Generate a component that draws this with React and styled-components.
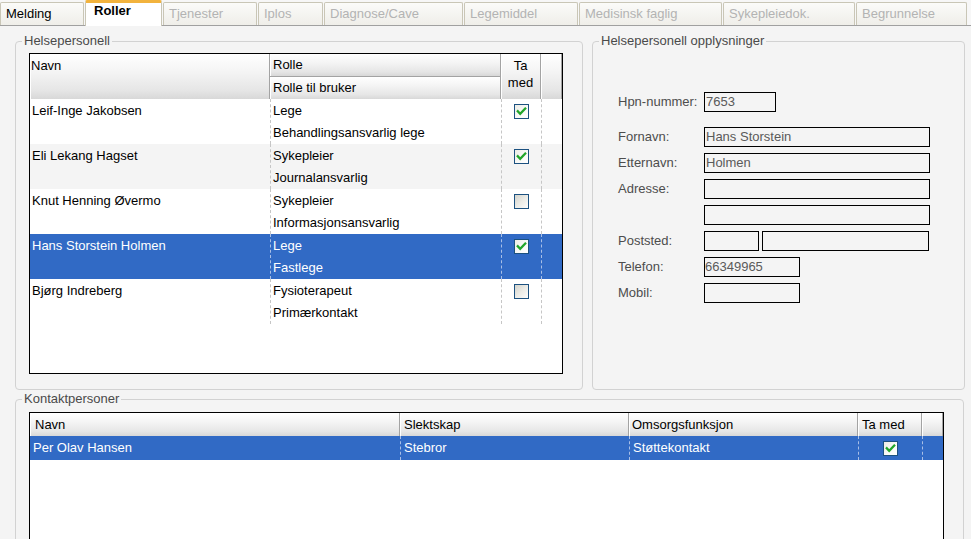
import React from 'react';
import styled, { createGlobalStyle } from 'styled-components';

const Global = createGlobalStyle`
  html, body { margin: 0; padding: 0; background: #f4f4f4; }
  body {
    font-family: "Liberation Sans", Arial, sans-serif;
    font-size: 13px;
    color: #000;
    overflow: hidden;
  }
`;

const Page = styled.div`
  width: 971px;
  height: 539px;
  display: flex;
  flex-direction: column;
  background: #f4f4f4;
  overflow: hidden;
`;

const TabStrip = styled.div`
  display: flex;
  align-items: flex-end;
  gap: 1px;
  height: 26px;
  box-sizing: border-box;
  border-bottom: 1px solid #a0a0a0;
  background: #f7f7f7;
`;

const Tab = styled.div`
  width: ${p => p.$w}px;
  flex: none;
  box-sizing: border-box;
  height: ${p => (p.$active ? 26 : 23)}px;
  margin-bottom: ${p => (p.$active ? -1 : 0)}px;
  padding-left: ${p => (p.$active ? 8 : 5)}px;
  display: flex;
  align-items: ${p => (p.$active ? 'flex-start' : 'center')};
  border: 1px solid #c9c6b6;
  border-bottom: none;
  border-top: ${p => (p.$active ? '3px solid #f2b33d' : '1px solid #c9c6b6')};
  border-radius: 2px 2px 0 0;
  background: ${p => (p.$active ? '#ffffff' : 'linear-gradient(#fbfbf9, #efeee9)')};
  color: ${p => (p.$disabled ? '#b3b3b3' : '#000')};
  font-weight: ${p => (p.$active ? 700 : 400)};
  line-height: 16px;
  white-space: nowrap;
  overflow: hidden;
`;

const Content = styled.div`
  display: flex;
  flex-direction: column;
  gap: 1px;
  padding: 7px 5px 0 15px;
`;

const TopRow = styled.div`
  display: flex;
  gap: 9px;
`;

const Group = styled.fieldset`
  margin: 0;
  padding: 0;
  min-width: 0;
  box-sizing: border-box;
  width: ${p => p.$w}px;
  border: 1px solid #d2d2d2;
  border-radius: 4px;
  background: #f4f4f4;
`;

const Legend = styled.legend`
  margin-left: 6px;
  padding: 0 2px;
  font-size: 13px;
  line-height: 16px;
  color: #4a4a4a;
`;

const GroupBody = styled.div`
  padding: ${p => p.$pad};
`;

const Table = styled.div`
  width: ${p => p.$w}px;
  height: ${p => p.$h}px;
  box-sizing: border-box;
  border: 1px solid #000;
  background: #fff;
  overflow: hidden;
`;

const Head = styled.div`
  display: grid;
  grid-template-columns: ${p => p.$cols};
  grid-template-rows: ${p => p.$rows};
`;

const HeadCell = styled.div`
  grid-row: ${p => p.$row || 'auto'};
  grid-column: ${p => p.$col || 'auto'};
  display: flex;
  flex-direction: column;
  justify-content: ${p => (p.$top ? 'flex-start' : 'center')};
  align-items: ${p => (p.$center ? 'center' : 'flex-start')};
  padding: ${p => p.$pad || '0 0 0 3px'};
  box-sizing: border-box;
  background: linear-gradient(#ffffff 0%, #f4f4f4 40%, #e6e6e6 80%, #d8d8d8 100%);
  border-right: 1px solid #a3a3a3;
  border-bottom: ${p => (p.$divider ? '1px solid #a3a3a3' : 'none')};
  box-shadow: inset 1px 1px 0 #ffffff;
  line-height: ${p => p.$lh || 16}px;
  white-space: nowrap;
  overflow: hidden;
`;

const Row = styled.div`
  display: grid;
  grid-template-columns: ${p => p.$cols};
  height: ${p => p.$h}px;
  background: ${p => (p.$sel ? '#316ac5' : p.$alt ? '#f4f4f4' : '#ffffff')};
  color: ${p => (p.$sel ? '#ffffff' : '#000000')};

  & > div + div {
    border-left: 1px dashed ${p => (p.$sel ? '#a9bfe6' : '#c6c6c6')};
  }
`;

const Cell = styled.div`
  display: flex;
  flex-direction: column;
  align-items: ${p => (p.$center ? 'center' : 'flex-start')};
  padding: ${p => p.$pad || '1px 0 0 2px'};
  box-sizing: border-box;
  white-space: nowrap;
  overflow: hidden;
`;

const Line = styled.div`
  height: ${p => p.$h || 22}px;
  line-height: ${p => p.$h || 22}px;
  display: flex;
  align-items: center;
`;

const Box = styled.span`
  width: 13px;
  height: 13px;
  flex: none;
  border: 1px solid #1c5180;
  display: inline-flex;
  align-items: center;
  justify-content: center;
  background: ${p =>
    p.$on
      ? 'linear-gradient(135deg, #ecece6 0%, #fafaf8 60%, #ffffff 100%)'
      : 'linear-gradient(135deg, #d2d2cb 0%, #ebebe6 50%, #fdfdfc 100%)'};
`;

function CheckBox({ on }) {
  return (
    <Box $on={on}>
      {on && (
        <svg width="13" height="13" viewBox="0 0 13 13">
          <path d="M2.8 6.2 L5.2 8.8 L10.2 3.6" fill="none" stroke="#22a52a" strokeWidth="2.3" strokeLinecap="square" />
        </svg>
      )}
    </Box>
  );
}

const Form = styled.div`
  display: flex;
  flex-direction: column;
  gap: 6px;
`;

const FormRow = styled.div`
  display: flex;
  align-items: center;
  gap: 3px;
  margin-bottom: ${p => (p.$extra ? 9 : 0)}px;
`;

const Label = styled.div`
  width: 83px;
  color: #4d4d4d;
  line-height: 16px;
`;

const Field = styled.div`
  width: ${p => p.$w}px;
  height: 20px;
  box-sizing: border-box;
  border: 1px solid #000;
  background: #f4f4f4;
  color: #5a5a5a;
  padding-left: ${p => (p.$tight ? 0 : 1)}px;
  line-height: 18px;
  white-space: nowrap;
  overflow: hidden;
`;

const tabs = [
  { t: 'Melding', w: 84 },
  { t: 'Roller', w: 77, active: true },
  { t: 'Tjenester', w: 94, disabled: true },
  { t: 'Iplos', w: 65, disabled: true },
  { t: 'Diagnose/Cave', w: 139, disabled: true },
  { t: 'Legemiddel', w: 114, disabled: true },
  { t: 'Medisinsk faglig', w: 143, disabled: true },
  { t: 'Sykepleiedok.', w: 132, disabled: true },
  { t: 'Begrunnelse', w: 111, disabled: true },
];

const people = [
  { name: 'Leif-Inge Jakobsen', role: 'Lege', sub: 'Behandlingsansvarlig lege', on: true },
  { name: 'Eli Lekang Hagset', role: 'Sykepleier', sub: 'Journalansvarlig', on: true, alt: true },
  { name: 'Knut Henning Øvermo', role: 'Sykepleier', sub: 'Informasjonsansvarlig', on: false },
  { name: 'Hans Storstein Holmen', role: 'Lege', sub: 'Fastlege', on: true, sel: true },
  { name: 'Bjørg Indreberg', role: 'Fysioterapeut', sub: 'Primærkontakt', on: false },
];

const COLS1 = '240px 231px 40px 21px';
const COLS2 = '370px 229px 229px 64px 21px';

export default function App() {
  return (
    <Page>
      <Global />
      <TabStrip>
        {tabs.map(tab => (
          <Tab key={tab.t} $w={tab.w} $active={tab.active} $disabled={tab.disabled}>
            {tab.t}
          </Tab>
        ))}
      </TabStrip>
      <Content>
        <TopRow>
          <Group $w={568}>
            <Legend>Helsepersonell</Legend>
            <GroupBody $pad="4px 13px 15px 13px">
              <Table $w={534} $h={321}>
                <Head $cols={COLS1} $rows="23px 22px">
                  <HeadCell $row="1 / span 2" $col="1" $top $pad="4px 0 0 1px">Navn</HeadCell>
                  <HeadCell $row="1" $col="2" $divider>Rolle</HeadCell>
                  <HeadCell $row="2" $col="2">Rolle til bruker</HeadCell>
                  <HeadCell $row="1 / span 2" $col="3" $top $center $pad="3px 0 0 0" $lh={17}>
                    <span>Ta</span>
                    <span>med</span>
                  </HeadCell>
                  <HeadCell $row="1 / span 2" $col="4" />
                </Head>
                {people.map(p => (
                  <Row key={p.name} $cols={COLS1} $h={45} $alt={p.alt} $sel={p.sel}>
                    <Cell>
                      <Line>{p.name}</Line>
                    </Cell>
                    <Cell>
                      <Line>{p.role}</Line>
                      <Line>{p.sub}</Line>
                    </Cell>
                    <Cell $center $pad="1px 0 0 0">
                      <Line>
                        <CheckBox on={p.on} />
                      </Line>
                    </Cell>
                    <Cell />
                  </Row>
                ))}
              </Table>
            </GroupBody>
          </Group>
          <Group $w={373}>
            <Legend>Helsepersonell opplysninger</Legend>
            <GroupBody $pad="43px 10px 0 25px">
              <Form>
                <FormRow $extra>
                  <Label>Hpn-nummer:</Label>
                  <Field $w={72}>7653</Field>
                </FormRow>
                <FormRow>
                  <Label>Fornavn:</Label>
                  <Field $w={226}>Hans Storstein</Field>
                </FormRow>
                <FormRow>
                  <Label>Etternavn:</Label>
                  <Field $w={226}>Holmen</Field>
                </FormRow>
                <FormRow>
                  <Label>Adresse:</Label>
                  <Field $w={226} />
                </FormRow>
                <FormRow>
                  <Label />
                  <Field $w={226} />
                </FormRow>
                <FormRow>
                  <Label>Poststed:</Label>
                  <Field $w={55} />
                  <Field $w={167} />
                </FormRow>
                <FormRow>
                  <Label>Telefon:</Label>
                  <Field $w={96} $tight>66349965</Field>
                </FormRow>
                <FormRow>
                  <Label>Mobil:</Label>
                  <Field $w={96} />
                </FormRow>
              </Form>
            </GroupBody>
          </Group>
        </TopRow>
        <Group $w={949}>
          <Legend>Kontaktpersoner</Legend>
          <GroupBody $pad="5px 19px 0 13px">
            <Table $w={915} $h={150}>
              <Head $cols={COLS2} $rows="23px">
                <HeadCell $pad="0 0 0 5px">Navn</HeadCell>
                <HeadCell $pad="0 0 0 4px">Slektskap</HeadCell>
                <HeadCell $pad="0 0 0 3px">Omsorgsfunksjon</HeadCell>
                <HeadCell $pad="0 0 0 4px">Ta med</HeadCell>
                <HeadCell />
              </Head>
              <Row $cols={COLS2} $h={24} $sel>
                <Cell $pad="0 0 0 3px">
                  <Line $h={24}>Per Olav Hansen</Line>
                </Cell>
                <Cell $pad="0 0 0 3px">
                  <Line $h={24}>Stebror</Line>
                </Cell>
                <Cell $pad="0 0 0 3px">
                  <Line $h={24}>Støttekontakt</Line>
                </Cell>
                <Cell $center $pad="0">
                  <Line $h={24}>
                    <CheckBox on />
                  </Line>
                </Cell>
                <Cell />
              </Row>
            </Table>
          </GroupBody>
        </Group>
      </Content>
    </Page>
  );
}
